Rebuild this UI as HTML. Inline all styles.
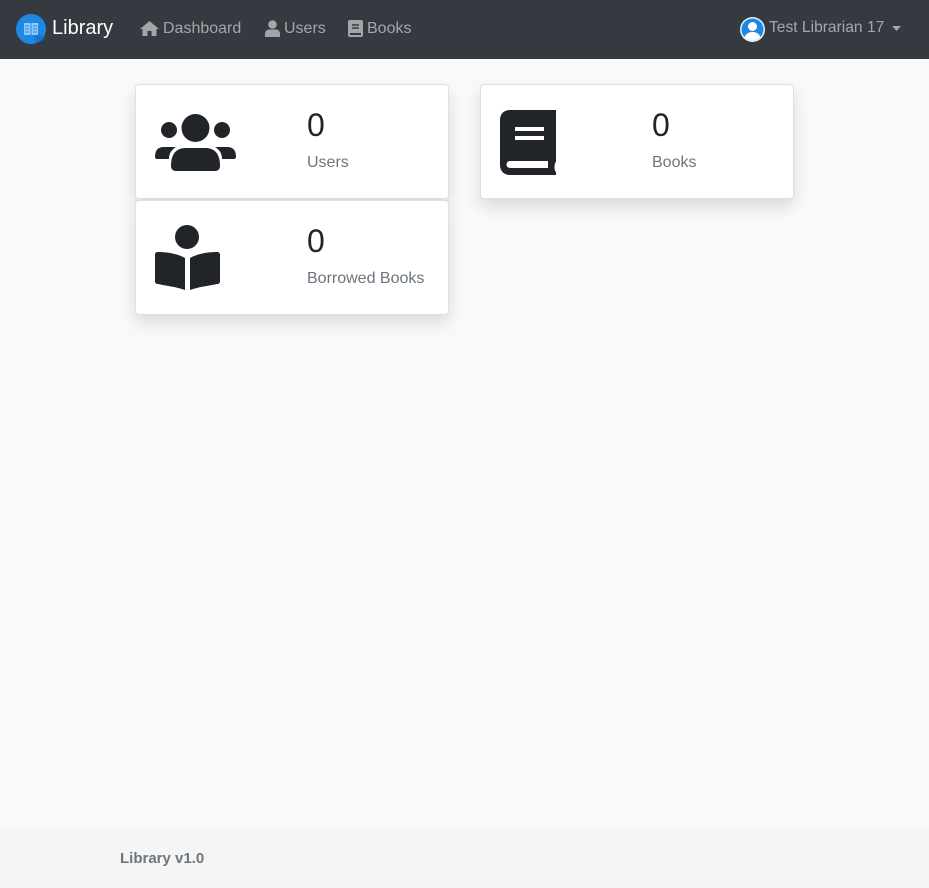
<!DOCTYPE html>
<html><head><meta charset="utf-8"><style>
*{box-sizing:border-box;margin:0;padding:0}
body{width:929px;height:888px;background:#f8f9fa;font-family:"Liberation Sans",sans-serif;position:relative;overflow:hidden}
.nav{position:absolute;left:0;top:0;width:929px;height:59px;background:#343a40}
.nav .t{position:absolute;font-size:16px;color:rgba(255,255,255,.55);top:20px}
.card{position:absolute;width:314px;height:115px;background:#fff;border:1px solid rgba(0,0,0,.125);border-radius:4px;box-shadow:0 8px 16px rgba(0,0,0,.12)}
.num{position:absolute;left:171px;top:22px;font-size:32px;color:#212529}
.lbl{position:absolute;left:171px;top:69px;font-size:16px;color:#6c757d}
svg{position:absolute}
.foot{position:absolute;left:0;top:828px;width:929px;height:60px;background:#f5f5f5}
</style></head><body>
<div class="nav">
<svg style="left:16px;top:14px" width="30" height="30" viewBox="0 0 30 30"><circle cx="15" cy="15" r="15" fill="#1e88e5"/><path d="M15 15 L30 24 A15 15 0 0 1 20 29 Z" fill="#1565c0" opacity=".6"/><rect x="8" y="9" width="6.5" height="12" fill="#90caf9"/><rect x="15.5" y="9" width="6.5" height="12" fill="#90caf9"/><path d="M9 12h4M9 15h4M9 18h4M17 12h4M17 15h4M17 18h4" stroke="#1e88e5" stroke-width="1"/></svg>
<div style="position:absolute;left:52px;top:17px;font-size:20px;color:#fff">Library</div>
<svg style="left:140px;top:21px" width="19" height="15" viewBox="0 0 19 15"><path d="M9.5 0L0 8h2.5v7h5v-5h4v5h5V8H19z" fill="rgba(255,255,255,.55)"/></svg>
<div class="t" style="left:163px">Dashboard</div>
<svg style="left:265px;top:20px" width="15" height="17" viewBox="0 0 15 17"><circle cx="7.5" cy="4.5" r="4.3" fill="rgba(255,255,255,.55)"/><path d="M0 17v-3c0-3 2-4.5 4-4.5h7c2 0 4 1.5 4 4.5v3z" fill="rgba(255,255,255,.55)"/></svg>
<div class="t" style="left:284px">Users</div>
<svg style="left:348px;top:20px" width="15" height="17" viewBox="0 0 15 17"><rect width="15" height="17" rx="2" fill="rgba(255,255,255,.55)"/><path d="M4 5h7M4 8h7" stroke="#343a40" stroke-width="1.5"/><rect x="2" y="13" width="11" height="2" fill="#343a40"/></svg>
<div class="t" style="left:367px">Books</div>
<svg style="left:740px;top:17px" width="25" height="25" viewBox="0 0 25 25"><circle cx="12.5" cy="12.5" r="12.5" fill="#e9f0f6"/><circle cx="12.5" cy="12.5" r="11" fill="#1e88e5"/><circle cx="12.5" cy="9.5" r="4.5" fill="#fff"/><path d="M4.5 20c2-4 5-5 8-5s6 1 8 5c-2 2-5 3.5-8 3.5s-6-1.5-8-3.5z" fill="#fff"/></svg>
<div class="t" style="left:769px;top:19px;font-size:15.6px">Test Librarian 17</div>
<svg style="left:892px;top:26px" width="9" height="5" viewBox="0 0 9 5"><path d="M0 0h9L4.5 5z" fill="rgba(255,255,255,.55)"/></svg>
</div>

<div class="card" style="left:135px;top:84px">
<svg style="left:19px;top:29px" width="81" height="57" viewBox="0 0 81 57"><circle cx="40.5" cy="14" r="14" fill="#212529"/><circle cx="14" cy="16" r="8" fill="#212529"/><circle cx="67" cy="16" r="8" fill="#212529"/><path d="M0 43c0-7 3-10 9-10h12c-5 3-7 7-7 12H2c-1 0-2-1-2-2zM81 43c0-7-3-10-9-10H60c5 3 7 7 7 12h12c1 0 2-1 2-2z" fill="#212529"/><path d="M16 52c0-13 6-18 15-18h19c9 0 15 5 15 18 0 3-2 5-5 5H21c-3 0-5-2-5-5z" fill="#212529"/></svg>
<div class="num">0</div><div class="lbl">Users</div>
</div>
<div class="card" style="left:135px;top:200px">
<svg style="left:19px;top:24px" width="65" height="66" viewBox="0 0 65 66"><circle cx="32" cy="12" r="12" fill="#212529"/><path d="M0 30c0-2 1-3 3-3 10 0 20 2 27 6v32C22 62 12 61 3 59c-2 0-3-1-3-3z" fill="#212529"/><path d="M65 30c0-2-1-3-3-3-10 0-20 2-27 6v32c8-3 18-4 27-6 2 0 3-1 3-3z" fill="#212529"/></svg>
<div class="num">0</div><div class="lbl">Borrowed Books</div>
</div>
<div class="card" style="left:480px;top:84px">
<svg style="left:19px;top:25px" width="57" height="65" viewBox="0 0 57 65"><path d="M10 0h46v52c-2 1-2 9 0 10v3H10C4 65 0 61 0 55V10C0 4 4 0 10 0z" fill="#212529"/><rect x="15" y="17" width="29" height="4" fill="#fff"/><rect x="15" y="26" width="29" height="4" fill="#fff"/><path d="M10 51h38v7H10c-2 0-3.5-1.5-3.5-3.5S8 51 10 51z" fill="#fff"/></svg>
<div class="num">0</div><div class="lbl">Books</div>
</div>

<div class="foot"><div style="position:absolute;left:120px;top:22px;font-size:15px;font-weight:bold;color:#6c757d">Library v1.0</div></div>
</body></html>
